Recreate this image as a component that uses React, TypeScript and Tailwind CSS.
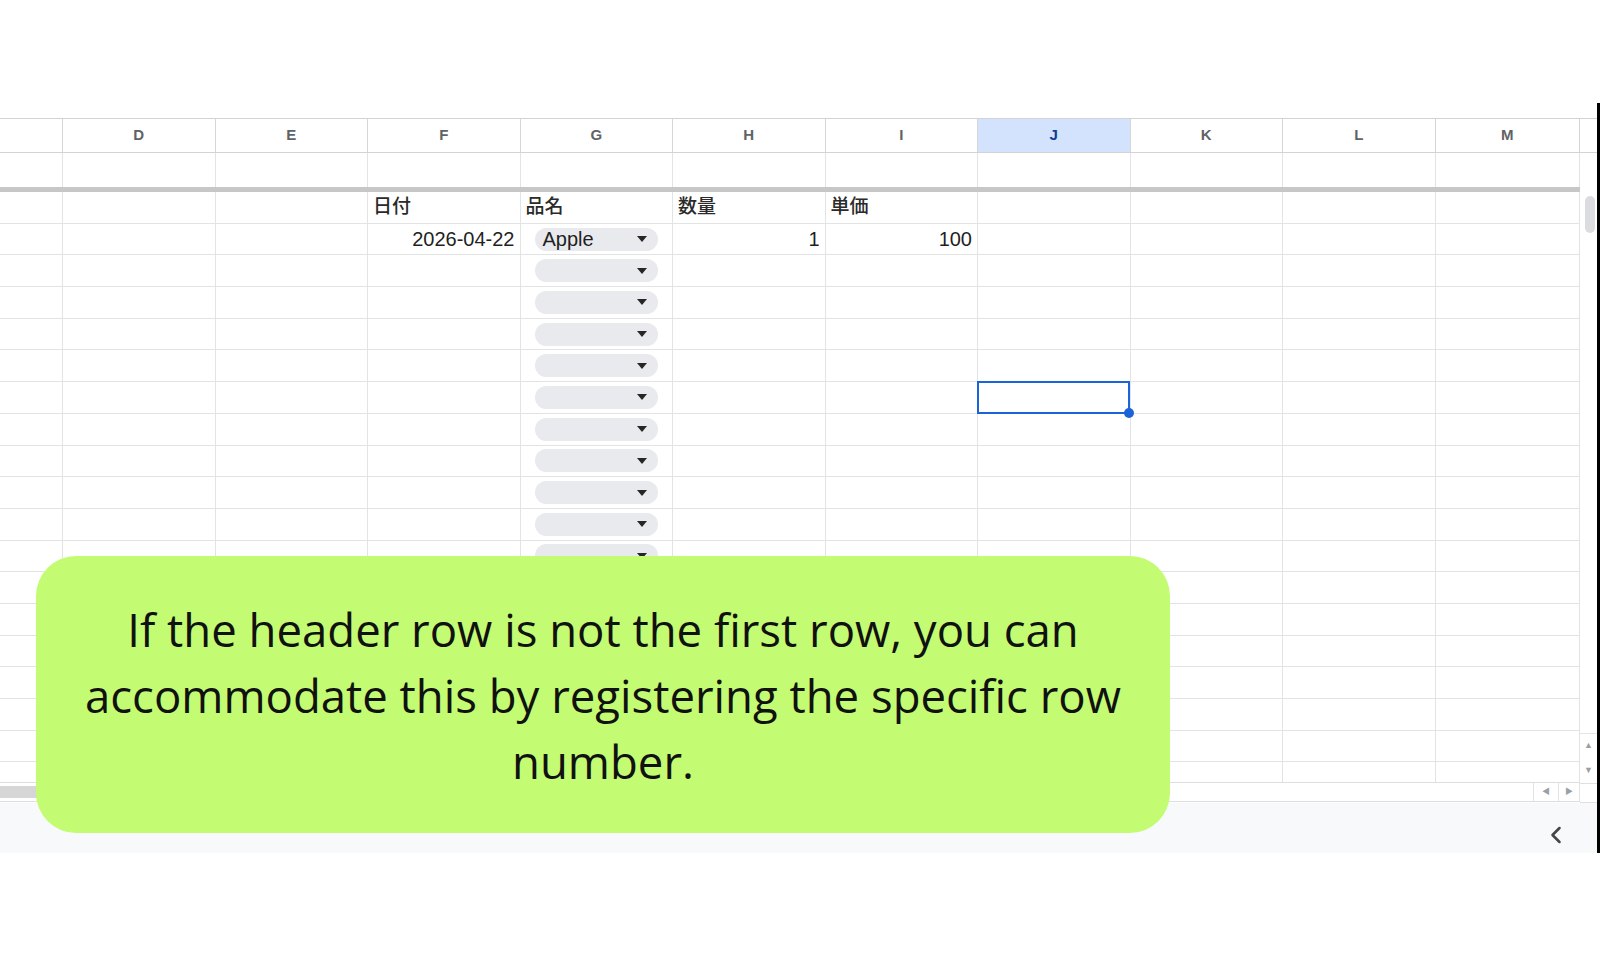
import React from 'react';
import { ChevronLeft } from 'lucide-react';

const LETTERS = ['', 'D', 'E', 'F', 'G', 'H', 'I', 'J', 'K', 'L', 'M'];
const GRID = 'grid grid-cols-[63px_repeat(9,152.5px)_144.5px]';

type Cell = { text?: string; align?: 'left' | 'right'; chip?: boolean; head?: boolean };

// row index -> column index -> cell
const rows: Record<number, Record<number, Cell>> = {
  0: {
    3: { text: '日付', head: true },
    4: { text: '品名', head: true },
    5: { text: '数量', head: true },
    6: { text: '単価', head: true },
  },
  1: {
    3: { text: '2026-04-22', align: 'right' },
    4: { text: 'Apple', chip: true },
    5: { text: '1', align: 'right' },
    6: { text: '100', align: 'right' },
  },
};
for (let r = 2; r <= 11; r++) rows[r] = { 4: { chip: true } };

const SELECTED = { row: 6, col: 7 };

function Caret() {
  return (
    <svg width="10" height="6" viewBox="0 0 10 6" className="shrink-0">
      <path d="M0 0h10L5 6z" fill="#262626" />
    </svg>
  );
}

function Chip({ label }: { label?: string }) {
  return (
    <div className="ml-[9px] mr-[14px] flex h-[23px] flex-1 items-center justify-between rounded-full bg-[#e8eaed] pl-[8px] pr-[11px] text-[20px] text-[#1f1f1f]">
      <span className="leading-none">{label}</span>
      <Caret />
    </div>
  );
}

function DataRow({ index, last }: { index: number; last?: boolean }) {
  const data = rows[index] || {};
  return (
    <div className={`${GRID} ${last ? 'h-[20px]' : 'h-[31.7px] border-b border-[#e2e3e3]'}`}>
      {LETTERS.map((_, c) => {
        const cell = data[c];
        const selected = SELECTED.row === index && SELECTED.col === c;
        return (
          <div
            key={c}
            className={`relative flex items-center border-r border-[#e2e3e3] ${
              cell?.align === 'right' ? 'justify-end pr-[5px]' : 'pl-[5px]'
            }`}
          >
            {cell?.chip ? (
              <Chip label={cell.text} />
            ) : cell?.text ? (
              <span className={cell.head ? 'text-[19px] font-medium text-[#2a2a2a]' : 'text-[20px] text-[#1f1f1f]'}>
                {cell.text}
              </span>
            ) : null}
            {selected && (
              <div className="absolute -top-px -left-px right-0 -bottom-px z-10 border-2 border-[#1b64d8]">
                <div className="absolute -right-[6px] -bottom-[6px] h-[10px] w-[10px] rounded-full bg-[#1b64d8]" />
              </div>
            )}
          </div>
        );
      })}
    </div>
  );
}

function VScrollbar() {
  return (
    <div className="flex w-[17px] flex-col">
      <div className="h-[35px] border-t border-b border-[#d3d3d3]" />
      <div className="h-[39px]" />
      <div className="flex-1 pl-[5px] pt-[4px]">
        <div className="h-[37px] w-[10px] rounded-full bg-[#dadce0]" />
      </div>
      <div className="flex h-[25px] items-center justify-center border-t border-[#e6e6e6] text-[9px] text-[#9aa0a6]">▲</div>
      <div className="flex h-[25px] items-center justify-center text-[9px] text-[#9aa0a6]">▼</div>
      <div className="h-[20px] border-t border-b border-[#e0e0e0]" />
    </div>
  );
}

export default function App() {
  return (
    <div className="relative h-[957px] w-[1600px] overflow-hidden bg-white font-['Liberation_Sans','Noto_Sans_CJK_JP',sans-serif]">
      <div className="h-[103px]" />
      <div className="flex h-[750px] flex-col border-r-[3px] border-black">
        <div className="h-[15px]" />
        <div className="flex h-[685px]">
          <div className="flex w-[1580px] flex-col">
            {/* column headers */}
            <div className={`${GRID} h-[35px] border-t border-b border-[#d3d3d3]`}>
              {LETTERS.map((l, c) => (
                <div
                  key={c}
                  className={`flex items-center justify-center border-r border-[#d6d6d6] text-[15px] font-semibold ${
                    c === 7 ? 'bg-[#d3e3fd] text-[#0b3f94]' : 'text-[#5f6368]'
                  }`}
                >
                  {l}
                </div>
              ))}
            </div>
            {/* frozen row */}
            <div className={`${GRID} h-[34px]`}>
              {LETTERS.map((_, c) => (
                <div key={c} className="border-r border-[#e2e3e3]" />
              ))}
            </div>
            <div className="h-[5px] bg-[#c7c7c7]" />
            {Array.from({ length: 18 }).map((_, i) => (
              <DataRow key={i} index={i} />
            ))}
            <DataRow index={18} last />
            {/* horizontal scrollbar */}
            <div className="flex h-[20px] border-t border-b border-[#dedede]">
              <div className="flex-1 py-[3px]">
                <div className="h-full w-[700px] bg-[#d6d6d6]" />
              </div>
              <div className="flex w-[25px] items-center justify-center border-l border-[#e3e3e3] text-[8px] text-[#9aa0a6]">◀</div>
              <div className="flex w-[22px] items-center justify-center border-l border-r border-[#e3e3e3] text-[8px] text-[#9aa0a6]">▶</div>
            </div>
          </div>
          <VScrollbar />
        </div>
        <div className="flex h-[50px] items-start justify-end bg-[#f8f9fa] pr-[27px] pt-[18px]">
          <ChevronLeft size={28} strokeWidth={2.2} color="#444746" />
        </div>
      </div>

      {/* caption */}
      <div className="absolute left-[36px] top-[556px] flex h-[277px] w-[1134px] items-center justify-center rounded-[40px] bg-[#c3fc72] px-5">
        <p className="text-center font-['Open_Sans',sans-serif] text-[45.5px] leading-[66px] text-[#111]">
          If the header row is not the first row, you can accommodate this by registering the specific row number.
        </p>
      </div>
    </div>
  );
}
